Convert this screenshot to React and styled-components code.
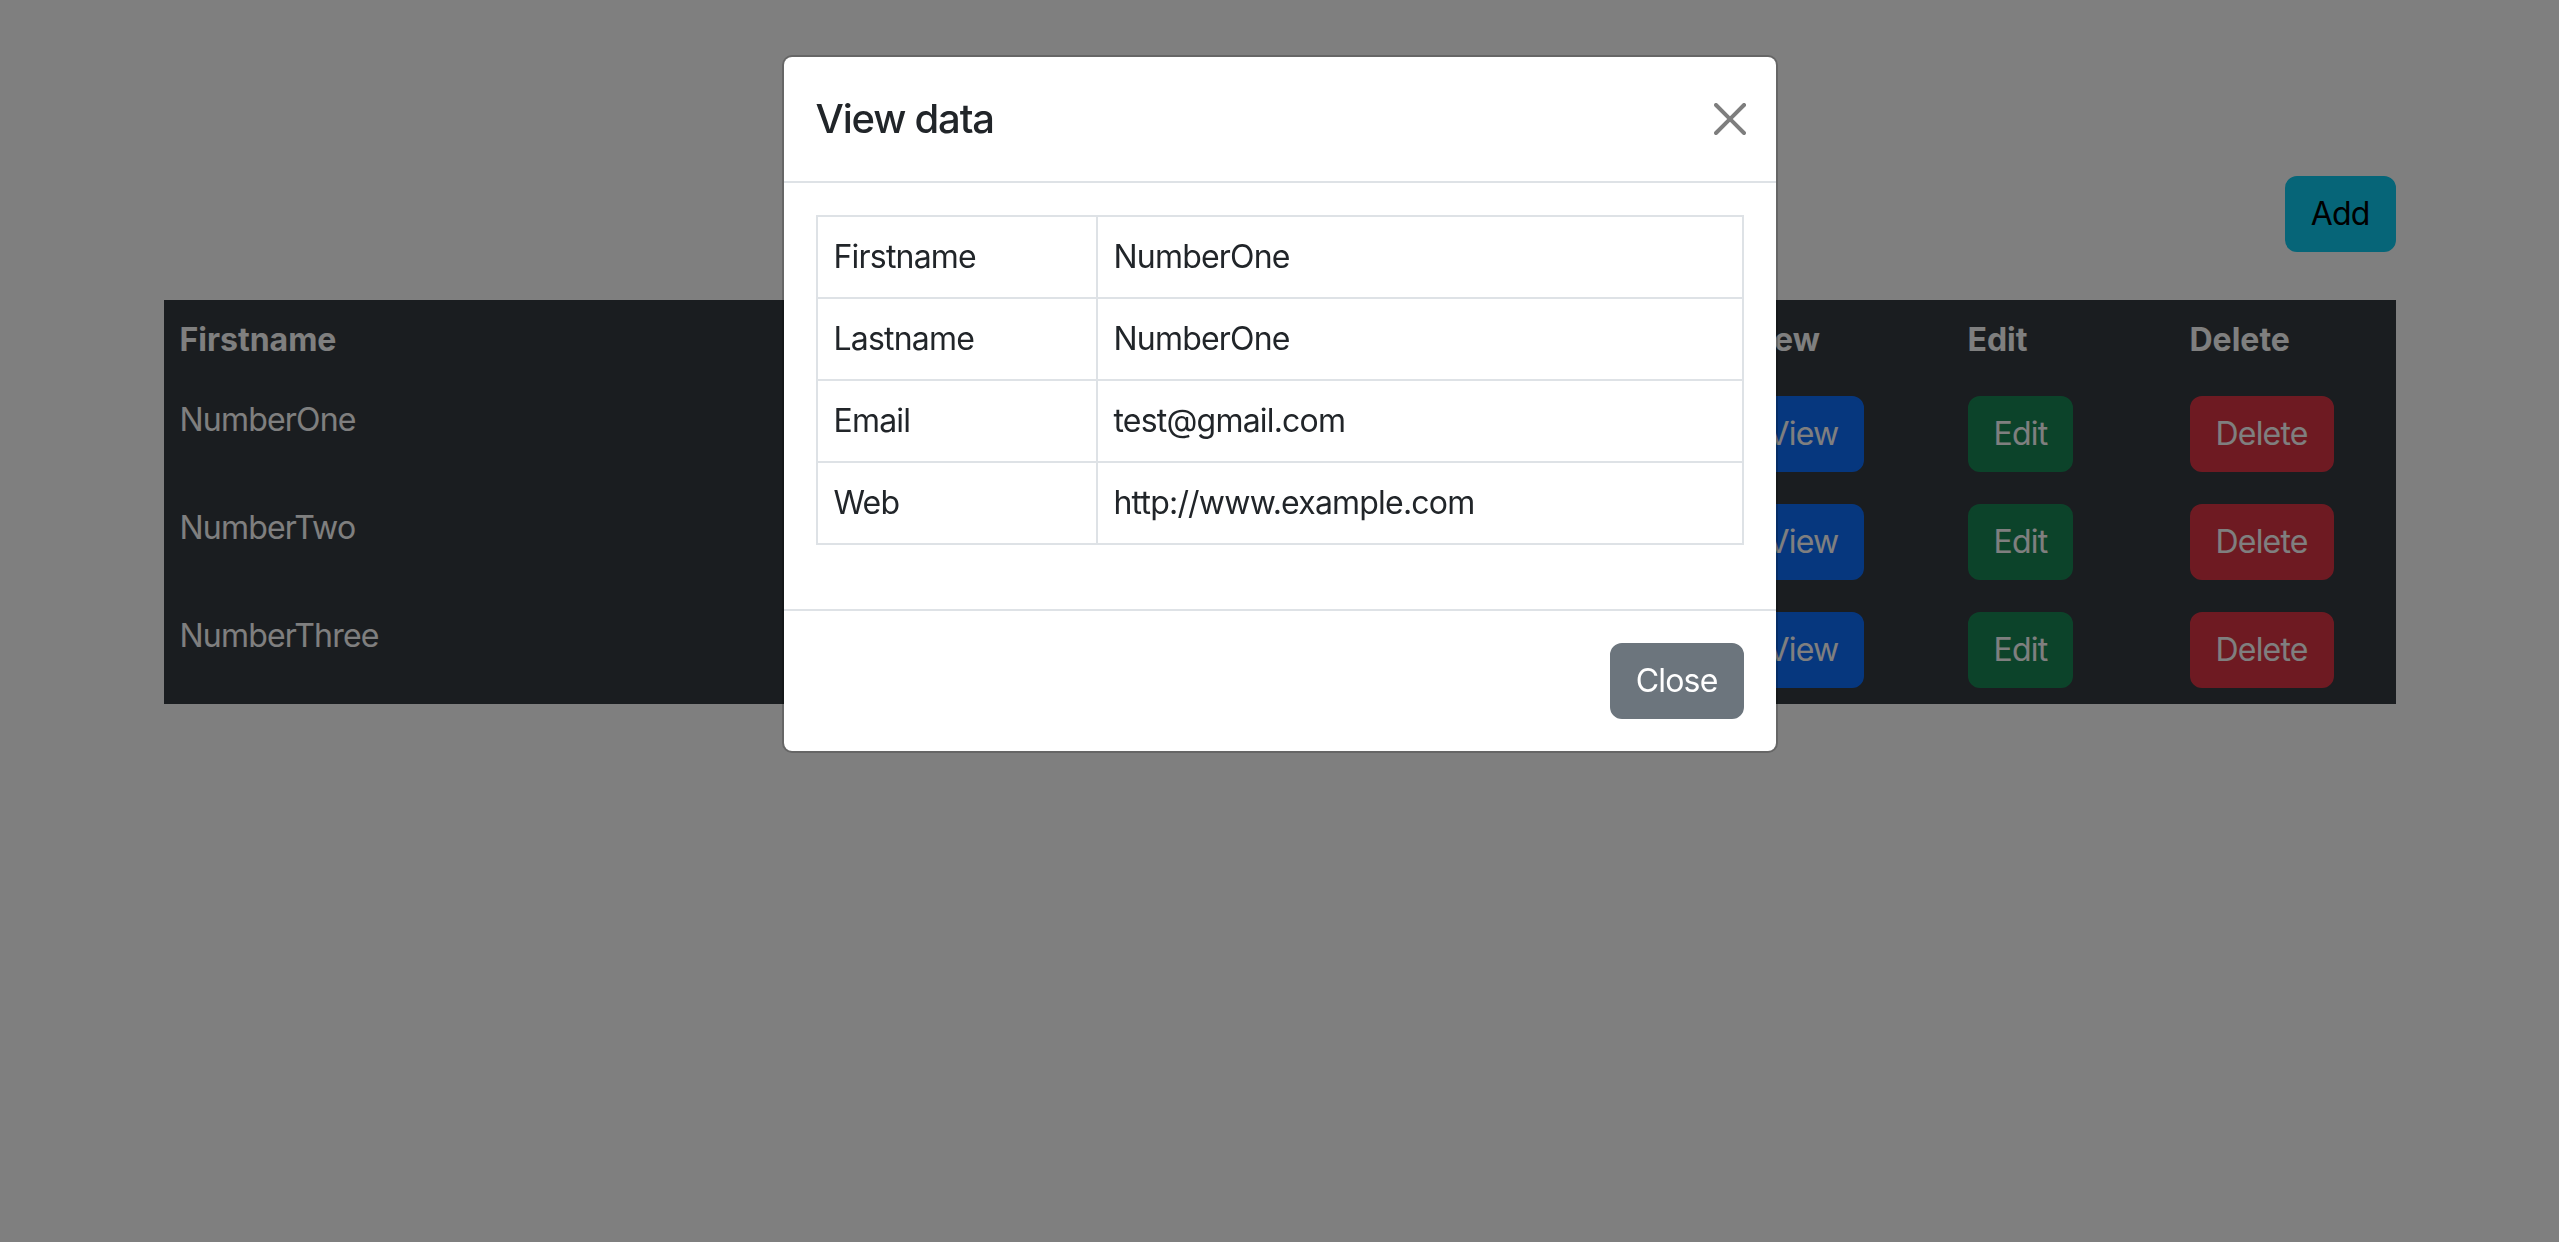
import React from "react";
import styled, { createGlobalStyle } from "styled-components";

const GlobalStyle = createGlobalStyle`
  *, *::before, *::after {
    box-sizing: border-box;
  }
  body {
    margin: 0;
    background: #ffffff;
    color: #212529;
    font-family: Inter, "Noto Sans", "Liberation Sans", sans-serif;
    font-size: 32px;
    line-height: 48px;
    letter-spacing: -0.025em;
    overflow: hidden;
  }
`;

const Container = styled.div`
  width: 2280px;
  margin: 0 auto;
  padding: 176px 24px 0;
`;

const Toolbar = styled.div`
  display: flex;
  justify-content: flex-end;
  margin-bottom: 48px;
`;

const colors = {
  primary: ["#0d6efd", "#ffffff"],
  success: ["#198754", "#ffffff"],
  danger: ["#dc3545", "#ffffff"],
  info: ["#0dcaf0", "#000000"],
  secondary: ["#6c757d", "#ffffff"],
};

const Button = styled.button`
  display: inline-block;
  padding: 12px 24px;
  font-family: inherit;
  font-size: 32px;
  line-height: 48px;
  font-weight: 400;
  letter-spacing: inherit;
  color: ${(p) => colors[p.$variant][1]};
  background: ${(p) => colors[p.$variant][0]};
  border: 2px solid ${(p) => colors[p.$variant][0]};
  border-radius: 12px;
  cursor: pointer;
`;

const DarkTable = styled.table`
  width: 100%;
  table-layout: fixed;
  border-collapse: collapse;
  background: #343a40;
  color: #ffffff;

  th,
  td {
    padding: 16px;
    text-align: left;
    vertical-align: top;
  }
  th {
    font-weight: 700;
    letter-spacing: 0;
  }
`;

const Backdrop = styled.div`
  position: fixed;
  inset: 0;
  background: rgba(0, 0, 0, 0.5);
`;

const ModalWrap = styled.div`
  position: fixed;
  inset: 0;
`;

const Dialog = styled.div`
  width: 996px;
  margin: 55px auto 0;
  background: #ffffff;
  border: 2px solid rgba(0, 0, 0, 0.2);
  border-radius: 10px;
  background-clip: padding-box;
`;

const Header = styled.div`
  display: flex;
  align-items: center;
  padding: 32px;
  border-bottom: 2px solid #dee2e6;
`;

const Title = styled.h5`
  margin: 0;
  font-size: 40px;
  line-height: 60px;
  font-weight: 500;
  letter-spacing: -0.03em;
  color: #212529;
`;

const CloseX = styled.button`
  box-sizing: content-box;
  width: 32px;
  height: 32px;
  padding: 8px;
  margin: -16px -10px -16px auto;
  border: 0;
  background: transparent;
  opacity: 0.5;
  cursor: pointer;
  display: flex;
  align-items: center;
  justify-content: center;
`;

const Body = styled.div`
  padding: 32px;
`;

const InfoTable = styled.table`
  width: 100%;
  border-collapse: collapse;
  margin-bottom: 32px;
  color: #212529;

  td {
    border: 2px solid #dee2e6;
    padding: 16px;
    vertical-align: top;
  }
  td:first-child {
    width: 280px;
  }
`;

const Footer = styled.div`
  display: flex;
  justify-content: flex-end;
  padding: 24px;
  border-top: 2px solid #dee2e6;

  & > * {
    margin: 8px;
  }
`;

const users = ["NumberOne", "NumberTwo", "NumberThree"];

const details = [
  ["Firstname", "NumberOne"],
  ["Lastname", "NumberOne"],
  ["Email", "test@gmail.com"],
  ["Web", "http://www.example.com"],
];

export default function App() {
  return (
    <>
      <GlobalStyle />
      <Container>
        <Toolbar>
          <Button $variant="info">Add</Button>
        </Toolbar>
        <DarkTable>
          <colgroup>
            <col />
            <col style={{ width: 226 }} />
            <col style={{ width: 222 }} />
            <col style={{ width: 222 }} />
          </colgroup>
          <thead>
            <tr>
              <th>Firstname</th>
              <th>View</th>
              <th>Edit</th>
              <th>Delete</th>
            </tr>
          </thead>
          <tbody>
            {users.map((name) => (
              <tr key={name}>
                <td>{name}</td>
                <td>
                  <Button $variant="primary">View</Button>
                </td>
                <td>
                  <Button $variant="success">Edit</Button>
                </td>
                <td>
                  <Button $variant="danger">Delete</Button>
                </td>
              </tr>
            ))}
          </tbody>
        </DarkTable>
      </Container>

      <Backdrop />
      <ModalWrap>
        <Dialog>
          <Header>
            <Title>View data</Title>
            <CloseX aria-label="Close">
              <svg width="32" height="32" viewBox="0 0 16 16" fill="#000">
                <path d="M.293.293a1 1 0 0 1 1.414 0L8 6.586 14.293.293a1 1 0 1 1 1.414 1.414L9.414 8l6.293 6.293a1 1 0 0 1-1.414 1.414L8 9.414l-6.293 6.293a1 1 0 0 1-1.414-1.414L6.586 8 .293 1.707a1 1 0 0 1 0-1.414z" />
              </svg>
            </CloseX>
          </Header>
          <Body>
            <InfoTable>
              <tbody>
                {details.map(([k, v]) => (
                  <tr key={k}>
                    <td>{k}</td>
                    <td>{v}</td>
                  </tr>
                ))}
              </tbody>
            </InfoTable>
          </Body>
          <Footer>
            <Button $variant="secondary">Close</Button>
          </Footer>
        </Dialog>
      </ModalWrap>
    </>
  );
}
